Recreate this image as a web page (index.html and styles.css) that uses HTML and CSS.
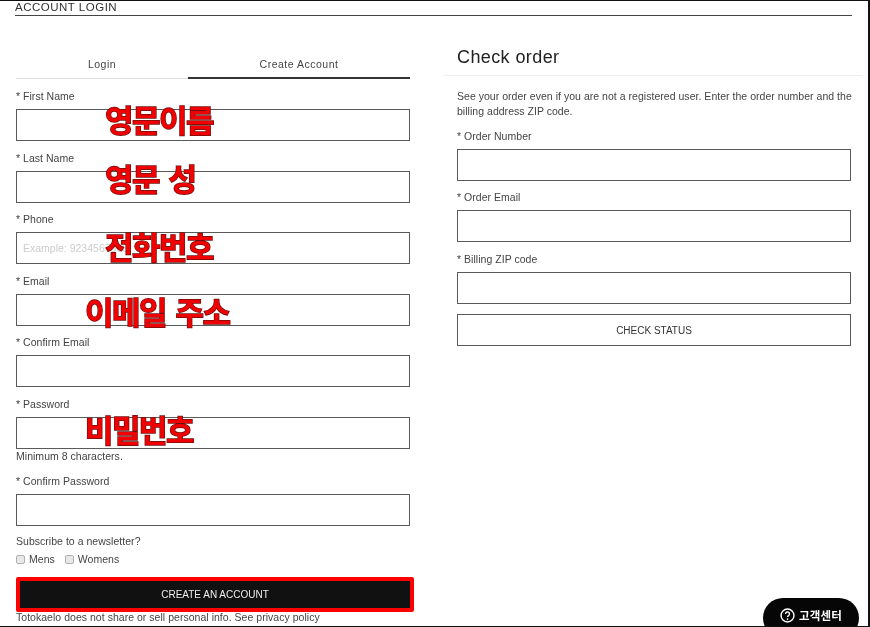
FILE: index.html
```html
<!DOCTYPE html>
<html lang="en">
<head>
<meta charset="utf-8">
<title>Account Login</title>
<link rel="stylesheet" href="styles.css">
</head>
<body>
<div class="frame">
  <header class="page-head">ACCOUNT LOGIN</header>
  <main class="columns">
    <section class="account">
      <div class="tabs">
        <div class="tab">Login</div>
        <div class="tab tab-active">Create Account</div>
      </div>
      <form class="fields">
        <div class="field">
          <label class="label">* First Name</label>
          <input class="input" type="text">
          <span class="mark mark-first">영문이름</span>
        </div>
        <div class="field">
          <label class="label">* Last Name</label>
          <input class="input" type="text">
          <span class="mark mark-last">영문 성</span>
        </div>
        <div class="field">
          <label class="label">* Phone</label>
          <input class="input" type="text" placeholder="Example: 9234567890">
          <span class="mark mark-phone">전화번호</span>
        </div>
        <div class="field">
          <label class="label">* Email</label>
          <input class="input" type="text">
          <span class="mark mark-email">이메일 주소</span>
        </div>
        <div class="field">
          <label class="label">* Confirm Email</label>
          <input class="input" type="text">
        </div>
        <div class="field">
          <label class="label">* Password</label>
          <input class="input" type="password">
          <span class="mark mark-password">비밀번호</span>
          <div class="hint">Minimum 8 characters.</div>
        </div>
        <div class="field">
          <label class="label">* Confirm Password</label>
          <input class="input" type="password">
        </div>
      </form>
      <div class="newsletter">Subscribe to a newsletter?</div>
      <div class="checks">
        <label class="check"><input class="box" type="checkbox">Mens</label>
        <label class="check"><input class="box" type="checkbox">Womens</label>
      </div>
      <button class="btn-create" type="button">CREATE AN ACCOUNT</button>
      <div class="privacy">Totokaelo does not share or sell personal info. See privacy policy</div>
    </section>
    <section class="order">
      <h2 class="order-title">Check order</h2>
      <div class="order-body">
        <p class="order-text">See your order even if you are not a registered user. Enter the order number and the billing address ZIP code.</p>
        <div class="fields">
          <div class="field">
            <label class="label">* Order Number</label>
            <input class="input" type="text">
          </div>
          <div class="field">
            <label class="label">* Order Email</label>
            <input class="input" type="text">
          </div>
          <div class="field">
            <label class="label">* Billing ZIP code</label>
            <input class="input" type="text">
          </div>
          <button class="btn-check" type="button">CHECK STATUS</button>
        </div>
      </div>
    </section>
  </main>
  <div class="help">
    <svg class="help-icon" viewBox="0 0 16 16" width="15" height="15" aria-hidden="true">
      <circle cx="8" cy="8" r="6.9" fill="none" stroke="#fff" stroke-width="1.5"/>
      <path d="M5.9 6.3a2.1 2.1 0 1 1 3.2 1.8c-.7.4-1.1.8-1.1 1.6" fill="none" stroke="#fff" stroke-width="1.5"/>
      <circle cx="8" cy="11.8" r=".9" fill="#fff"/>
    </svg>
    <span class="help-text">고객센터</span>
  </div>
</div>
</body>
</html>
```

FILE: styles.css
```css
* { box-sizing: border-box; }

html, body {
  margin: 0;
  padding: 0;
  height: 627px;
  overflow: hidden;
  background: #fff;
}

body {
  font-family: "Liberation Sans", Arial, sans-serif;
  font-size: 10.5px;
  color: #444;
  letter-spacing: 0.03px;
}

.frame {
  position: relative;
  width: 870px;
  height: 627px;
  overflow: hidden;
  border-top: 1px solid #111;
  border-right: 2px solid #111;
  border-bottom: 1px solid #111;
  filter: blur(0.35px);
}

.page-head {
  margin: 0 16px 0 15px;
  height: 15px;
  line-height: 12px;
  font-size: 11.5px;
  color: #333;
  letter-spacing: 0.5px;
  border-bottom: 1px solid #444;
}

.columns {
  display: grid;
  grid-template-columns: 394px 418px;
  column-gap: 34px;
  padding-left: 16px;
  margin-top: 29px;
}

.tabs {
  display: grid;
  grid-template-columns: 172px 222px;
  margin-top: 6px;
  height: 28px;
  align-items: end;
}

.tab {
  height: 28px;
  line-height: 26px;
  text-align: center;
  letter-spacing: 0.5px;
  border-bottom: 1px solid #ddd;
}

.tab-active {
  border-bottom: 2px solid #333;
}

.fields {
  display: flex;
  flex-direction: column;
  gap: 10.6px;
}

.account .fields {
  margin-top: 11px;
}

.field {
  position: relative;
  display: flex;
  flex-direction: column;
}

.label {
  height: 13px;
  line-height: 13px;
  margin-bottom: 6px;
}

.input {
  display: block;
  width: 100%;
  height: 32px;
  margin: 0;
  padding: 0 6px;
  border: 1px solid #5a5a5a;
  border-radius: 0;
  background: transparent;
  font: 10.5px "Liberation Sans", Arial, sans-serif;
}

.input::placeholder {
  color: #ccc;
  opacity: 1;
}

.mark {
  position: absolute;
  left: 89px;
  font-family: "Noto Sans CJK KR", sans-serif;
  font-weight: 700;
  font-size: 31px;
  line-height: 36px;
  letter-spacing: -1.5px;
  word-spacing: 4px;
  white-space: nowrap;
  color: #f00000;
  -webkit-text-stroke: 1.4px #6a1010;
  paint-order: stroke fill;
}

.mark-first { top: 11px; }
.mark-last { top: 8px; }
.mark-phone { top: 15px; }
.mark-email { top: 18px; left: 69px; }
.mark-password { top: 13px; left: 69px; }

.hint {
  height: 13px;
  line-height: 13px;
  margin: 1px 0 1.4px;
}

.newsletter {
  margin-top: 9px;
  height: 13px;
  line-height: 13px;
}

.checks {
  display: flex;
  gap: 10px;
  margin-top: 5px;
  height: 13px;
}

.check {
  display: flex;
  align-items: center;
  gap: 4px;
  line-height: 13px;
}

.box {
  appearance: none;
  width: 9px;
  height: 9px;
  margin: 0;
  background: #e8e8e8;
  border: 1px solid #b0b0b0;
  border-radius: 2px;
}

.btn-create {
  display: block;
  width: 398px;
  height: 35px;
  margin: 11px 0 0;
  padding: 0;
  background: #111;
  color: #eee;
  border: 4px solid #f00;
  border-radius: 2px;
  font: 10px "Liberation Sans", Arial, sans-serif;
}

.privacy {
  height: 13px;
  line-height: 13px;
  margin-top: -1px;
}

.order-title {
  margin: 0;
  height: 31px;
  padding: 0 0 0 13px;
  font-weight: 400;
  font-size: 18px;
  line-height: 24px;
  letter-spacing: 0.4px;
  color: #222;
  border-bottom: 1px solid #eee;
}

.order-body {
  padding: 0 11px 0 13px;
}

.order-text {
  margin: 12.5px -4px 11px 0;
  line-height: 15px;
}

.btn-check {
  display: block;
  width: 100%;
  height: 32px;
  margin: 0;
  padding: 0;
  background: #fff;
  color: #333;
  border: 1px solid #5a5a5a;
  font: 10px "Liberation Sans", Arial, sans-serif;
}

.help {
  position: absolute;
  right: 9px;
  bottom: -12px;
  width: 96px;
  height: 40px;
  display: flex;
  align-items: center;
  justify-content: center;
  gap: 4px;
  padding-bottom: 6px;
  background: #060606;
  border-radius: 20px;
}

.help-text {
  font-family: "Noto Sans CJK KR", sans-serif;
  font-weight: 700;
  font-size: 11.5px;
  letter-spacing: 0.2px;
  color: #fff;
}
```
